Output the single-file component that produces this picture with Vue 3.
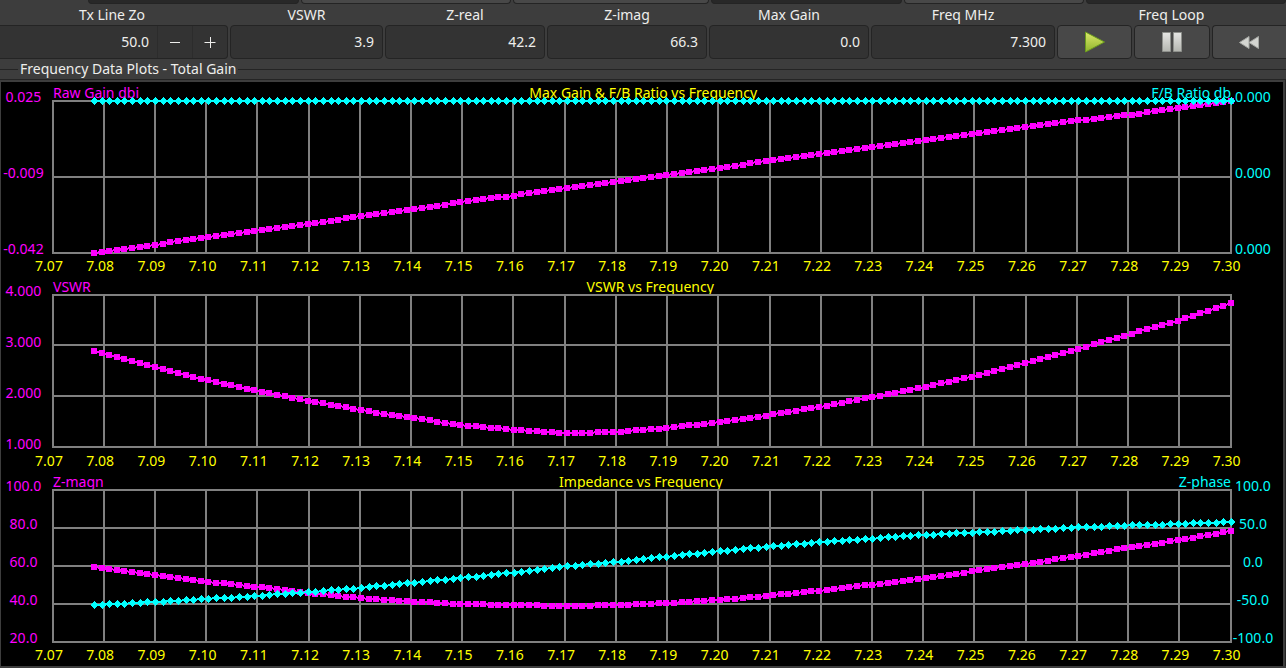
<script setup>
import { ref, onMounted, onBeforeUnmount } from 'vue'

const stubs = [
  { weight: 87, tone: 'bare' },
  { weight: 211, tone: 'dark' },
  { weight: 210, tone: 'light' },
  { weight: 196, tone: 'light' },
  { weight: 190, tone: 'dark' },
  { weight: 180, tone: 'light' },
  { weight: 200, tone: 'dark' },
]

const readouts = [
  { id: 'vswr', label: 'VSWR', value: '3.9', weight: 153 },
  { id: 'z-real', label: 'Z-real', value: '42.2', weight: 160 },
  { id: 'z-imag', label: 'Z-imag', value: '66.3', weight: 160 },
  { id: 'max-gain', label: 'Max Gain', value: '0.0', weight: 160 },
  { id: 'freq', label: 'Freq MHz', value: '7.300', weight: 184 },
]

const F_MIN = 7.07
const F_MAX = 7.3
const SWEEP_START = 7.078
const SWEEP_STEPS = 149
const freqTicks = Array.from({ length: 24 }, (_, i) => (F_MIN + i / 100).toFixed(2))

// Sample depths are measured down from the top axis line, DEPTH being the full axis.
// The first sample is at the sweep start, the others at 7.09, 7.10 ... 7.30 MHz.
const DEPTH = 152

const charts = [
  {
    title: 'Max Gain & F/B Ratio vs Frequency',
    titleAt: 50.1,
    leftTitle: 'Raw Gain dbi',
    rightTitle: 'F/B Ratio db',
    left: ['0.025', '-0.009', '-0.042'],
    right: ['0.000', '0.000', '0.000'],
    series: [
      {
        kind: 'square',
        samples: [152, 143.5, 136.5, 129.5, 122.5, 115.5, 108.5, 101, 94.5, 87.5, 81, 74, 67, 59.5, 53, 46, 39.5, 33, 26, 19.5, 14, 7, 0],
      },
      { kind: 'diamond', samples: Array(23).fill(0) },
    ],
  },
  {
    title: 'VSWR vs Frequency',
    titleAt: 50.7,
    leftTitle: 'VSWR',
    rightTitle: '',
    left: ['4.000', '3.000', '2.000', '1.000'],
    right: [],
    series: [
      {
        kind: 'square',
        samples: [56, 72, 85, 96, 106, 115, 123, 130, 135, 138, 137, 133, 127, 120, 111.5, 102, 92, 81, 67.7, 54, 39.5, 25, 8],
      },
    ],
  },
  {
    title: 'Impedance vs Frequency',
    titleAt: 49.9,
    leftTitle: 'Z-magn',
    rightTitle: 'Z-phase',
    left: ['100.0', '80.0', '60.0', '40.0', '20.0'],
    right: ['100.0', '50.0', '0.0', '-50.0', '-100.0'],
    series: [
      {
        kind: 'square',
        samples: [77, 85, 91.7, 97, 103, 108, 111.5, 114, 115, 116, 115, 113, 110, 105.5, 100.5, 94.5, 88.5, 81, 74, 66, 57.5, 50, 41],
      },
      {
        kind: 'diamond',
        samples: [115, 112, 109, 106, 102, 98, 93, 88, 82.5, 76.5, 72, 66.5, 61.5, 56.5, 52, 48.5, 45, 42.5, 40, 37.5, 35.5, 34, 32],
      },
    ],
  },
]

const plotEls = ref([])
const size = ref({ w: 1178, h: 152 })

function measure() {
  const el = plotEls.value[0]
  if (!el) return
  const box = el.getBoundingClientRect()
  size.value = { w: Math.round(box.width), h: Math.round(box.height) }
}

let observer
onMounted(() => {
  measure()
  observer = new ResizeObserver(measure)
  observer.observe(plotEls.value[0])
})
onBeforeUnmount(() => observer.disconnect())

function gridX(i) {
  return Math.floor((size.value.w * i) / (freqTicks.length - 1))
}
function gridY(i, count) {
  return Math.floor((size.value.h * i) / (count - 1))
}

function depthAt(samples, f) {
  const knotF = (i) => (i === 0 ? SWEEP_START : 7.08 + i / 100)
  let i = 0
  while (i < samples.length - 2 && f > knotF(i + 1)) i++
  const t = (f - knotF(i)) / (knotF(i + 1) - knotF(i))
  return samples[i] + (samples[i + 1] - samples[i]) * t
}

function points(samples) {
  const { w, h } = size.value
  return Array.from({ length: SWEEP_STEPS + 1 }, (_, k) => {
    const f = SWEEP_START + ((F_MAX - SWEEP_START) * k) / SWEEP_STEPS
    return {
      x: Math.round(((f - F_MIN) / (F_MAX - F_MIN)) * w),
      y: Math.round((depthAt(samples, f) / DEPTH) * h),
    }
  })
}
function linePath(samples) {
  return points(samples).map((p) => `${p.x},${p.y}`).join(' ')
}
function markerPath(series) {
  const shape = series.kind === 'square' ? 'm-3,-3h6v6h-6z' : 'm0,-4l4,4l-4,4l-4,-4z'
  return points(series.samples).map((p) => `M${p.x},${p.y}${shape}`).join('')
}
</script>

<template>
  <main class="window">
    <div class="strip" aria-hidden="true">
      <span v-for="(s, i) in stubs" :key="i" class="stub" :class="s.tone" :style="{ flexGrow: s.weight }"></span>
    </div>

    <div class="toolbar">
      <div class="field" :style="{ flexGrow: 228 }">
        <label class="caption spin-caption" for="zo">Tx Line Zo</label>
        <div class="box spin">
          <input id="zo" class="value" type="text" value="50.0" />
          <button class="step" type="button" aria-label="Decrease">
            <svg width="12" height="12" viewBox="0 0 12 12"><path d="M1 6.5h10" /></svg>
          </button>
          <button class="step" type="button" aria-label="Increase">
            <svg width="12" height="12" viewBox="0 0 12 12"><path d="M0.5 6.5h11M6.5 1v11" /></svg>
          </button>
        </div>
      </div>

      <div v-for="r in readouts" :key="r.id" class="field" :style="{ flexGrow: r.weight }">
        <label class="caption" :for="r.id">{{ r.label }}</label>
        <div class="box">
          <input :id="r.id" class="value" type="text" readonly :value="r.value" />
        </div>
      </div>

      <div class="field" :style="{ flexGrow: 229 }">
        <span class="caption">Freq Loop</span>
        <div class="buttons">
          <button class="btn" type="button" aria-label="Play">
            <svg width="22" height="22" viewBox="0 0 22 22">
              <defs>
                <linearGradient id="play" x1="0" y1="0" x2="0" y2="1">
                  <stop offset="0" stop-color="#dbe86a" />
                  <stop offset="1" stop-color="#8fb52c" />
                </linearGradient>
              </defs>
              <path d="M1.5 1L20.5 11L1.5 21Z" fill="url(#play)" stroke="#6a9a1e" />
            </svg>
          </button>
          <button class="btn" type="button" aria-label="Pause">
            <svg width="22" height="22" viewBox="0 0 22 22">
              <defs>
                <linearGradient id="pause" x1="0" y1="0" x2="0" y2="1">
                  <stop offset="0" stop-color="#e6e6e4" />
                  <stop offset="1" stop-color="#b4b6b0" />
                </linearGradient>
              </defs>
              <path d="M1.5 1.5h8v19h-8zM12.5 1.5h8v19h-8z" fill="url(#pause)" stroke="#8e908c" />
            </svg>
          </button>
          <button class="btn last" type="button" aria-label="Rewind">
            <svg width="22" height="22" viewBox="0 0 22 22">
              <path d="M11 5.5v12L1.5 11.5ZM20.5 5.5v12L11 11.5Z" fill="#d4d5d1" stroke="#a4a6a2" />
            </svg>
          </button>
        </div>
      </div>
    </div>

    <h1 class="legend">Frequency Data Plots - Total Gain</h1>

    <section class="frame">
      <div class="panel">
        <figure v-for="(c, n) in charts" :key="c.title" class="chart">
          <figcaption class="titles">
            <span class="magenta">{{ c.leftTitle }}</span>
            <span class="title" :style="{ left: c.titleAt + '%' }">{{ c.title }}</span>
            <span class="cyan">{{ c.rightTitle }}</span>
          </figcaption>
          <div class="axis left">
            <span v-for="t in c.left" :key="t">{{ t }}</span>
          </div>
          <div class="plot" :ref="(el) => { plotEls[n] = el }">
            <svg :width="size.w" :height="size.h" role="img" :aria-label="c.title">
              <rect v-for="(t, i) in freqTicks" :key="t" class="grid"
                :x="gridX(i) - 1" y="-1" width="2" :height="size.h + 2" />
              <rect v-for="(t, i) in c.left" :key="t" class="grid"
                x="-1" :y="gridY(i, c.left.length) - 1" :width="size.w + 2" height="2" />
              <g v-for="s in c.series" :key="s.kind" :class="s.kind">
                <polyline :points="linePath(s.samples)" />
                <path :d="markerPath(s)" />
              </g>
            </svg>
          </div>
          <div class="axis right">
            <span v-for="(t, i) in c.right" :key="i">{{ t }}</span>
          </div>
          <div class="ticks">
            <span v-for="t in freqTicks" :key="t">{{ t }}</span>
          </div>
        </figure>
      </div>
    </section>
  </main>
</template>

<style>
body {
  background: #3d3d3d;
}
</style>

<style scoped>
.window {
  display: flex;
  flex-direction: column;
  box-sizing: border-box;
  min-height: 100vh;
  padding-bottom: 2px;
  overflow: hidden;
  background: #3d3d3d;
  color: #eeeeec;
  font: 14px/20px "Noto Sans", "Open Sans", sans-serif;
}
.strip {
  display: flex;
  gap: 2px;
  height: 4px;
}
.stub {
  flex: 1 1 0;
  box-sizing: border-box;
  border: solid #242424;
  border-width: 0 1px 1px;
  border-radius: 0 0 4px 4px;
  background: #484848;
}
.stub.dark {
  background: #282828;
}
.stub.bare {
  border: 0;
  background: none;
}
.toolbar {
  display: flex;
  gap: 2px;
}
.field {
  display: flex;
  flex: 1 1 0;
  flex-direction: column;
  min-width: 0;
}
.caption {
  height: 21px;
  line-height: 22px;
  text-align: center;
}
.spin-caption {
  padding-right: 4px;
}
.box {
  display: flex;
  box-sizing: border-box;
  height: 34px;
  border: 1px solid #242424;
  border-radius: 4px;
  background: #333333;
  overflow: hidden;
}
.spin {
  border-left: 0;
  border-radius: 0 4px 4px 0;
}
.value {
  flex: 1;
  width: 0;
  min-width: 0;
  padding: 0 8px;
  border: 0;
  outline: 0;
  background: none;
  color: inherit;
  font: inherit;
  text-align: right;
}
.step {
  display: flex;
  align-items: center;
  justify-content: center;
  box-sizing: border-box;
  width: 35px;
  padding: 0;
  border: 0;
  border-left: 1px solid #2c2c2c;
  background: none;
}
.step path {
  fill: none;
  stroke: #eeeeec;
}
.buttons {
  display: flex;
  gap: 2px;
}
.btn {
  display: flex;
  flex: 1 1 0;
  align-items: center;
  justify-content: center;
  box-sizing: border-box;
  height: 34px;
  padding: 0;
  border: 1px solid #242424;
  border-radius: 4px;
  background: #484848;
}
.btn.last {
  border-right: 0;
  border-radius: 4px 0 0 4px;
}
.legend {
  display: flex;
  align-items: center;
  gap: 2px;
  height: 20px;
  margin: 0;
  font: inherit;
  line-height: 22px;
}
.legend::before,
.legend::after {
  content: "";
  width: 18px;
  height: 1px;
  background: #242424;
}
.legend::after {
  flex: 1;
}
.frame {
  display: flex;
  flex: 1;
  padding: 2px 2px 0 1px;
  border-top: 1px solid #242424;
  border-right: 1px solid #242424;
}
.panel {
  display: flex;
  flex: 1;
  flex-direction: column;
  min-width: 0;
  padding-bottom: 1px;
  background: #000000;
}
.chart {
  display: grid;
  flex: 1;
  grid-template-columns: 52px 1fr 52px;
  grid-template-rows: 19px minmax(120px, 1fr) 23px;
  margin: 0;
}
.titles {
  position: relative;
  display: flex;
  grid-column: 2;
  justify-content: space-between;
  line-height: 22px;
  white-space: nowrap;
}
.title {
  position: absolute;
  transform: translateX(-50%);
  color: #ffff00;
}
.magenta,
.left {
  color: #ff00ff;
}
.cyan,
.right {
  color: #00ffff;
}
.axis {
  display: flex;
  grid-row: 2;
  flex-direction: column;
  justify-content: space-between;
  margin: -4px 0 4px;
  text-align: center;
}
.axis span {
  height: 0;
  line-height: 0;
}
.left {
  grid-column: 1;
  padding-right: 7px;
}
.right {
  grid-column: 3;
  padding-right: 8px;
}
.plot {
  position: relative;
  grid-row: 2;
  grid-column: 2;
  min-width: 0;
}
.plot svg {
  position: absolute;
  top: 0;
  left: 0;
  overflow: visible;
  shape-rendering: crispEdges;
}
.grid {
  fill: #808080;
}
polyline {
  fill: none;
  stroke-width: 2;
}
.square {
  fill: #ff00ff;
  stroke: none;
}
.square polyline {
  stroke: #ff00ff;
}
.diamond {
  fill: #00ffff;
}
.diamond polyline {
  stroke: #00ffff;
}
.ticks {
  display: flex;
  grid-row: 3;
  grid-column: 2;
  justify-content: space-between;
  margin: 0 4px 0 -4px;
  color: #ffff00;
  line-height: 26px;
}
.ticks span {
  display: flex;
  justify-content: center;
  width: 0;
}
</style>
